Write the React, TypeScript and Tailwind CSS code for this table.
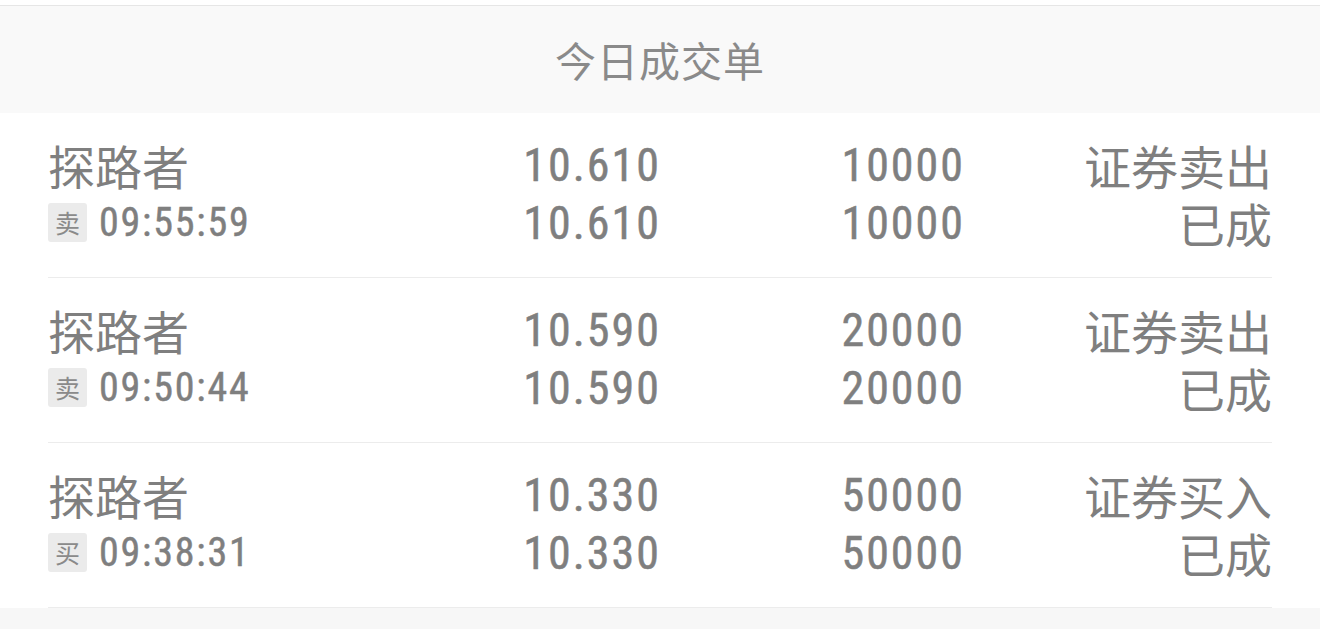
import React from "react";

const rows = [
  { name: "探路者", side: "卖", time: "09:55:59", price: "10.610", qty: "10000", type: "证券卖出", status: "已成" },
  { name: "探路者", side: "卖", time: "09:50:44", price: "10.590", qty: "20000", type: "证券卖出", status: "已成" },
  { name: "探路者", side: "买", time: "09:38:31", price: "10.330", qty: "50000", type: "证券买入", status: "已成" },
];

function Num({ children }: { children: React.ReactNode }) {
  return (
    <div className="h-[58px] text-[46px] leading-[58px] tracking-[2px] mr-[-2px] [-webkit-text-stroke:0.5px_#7f7f7f] font-['Roboto_Condensed','Roboto',sans-serif]">
      {children}
    </div>
  );
}

function Cjk({ children }: { children: React.ReactNode }) {
  return <div className="h-[58px] text-[47px] leading-[58px]">{children}</div>;
}

export default function App() {
  return (
    <div className="w-[1320px] h-[629px] bg-[#f7f7f7] overflow-hidden font-['Noto_Sans_CJK_SC','Noto_Sans',sans-serif]">
      <div className="h-[5px] bg-white" />
      <div className="h-[108px] bg-[#f9f9f9] border-t border-[#e6e6e6] flex items-center justify-center">
        <span className="text-[41px] leading-none text-[#8a8a8a] tracking-[1px]">今日成交单</span>
      </div>
      <div className="bg-white px-[48px]">
        {rows.map((r, i) => (
          <div
            key={i}
            className="h-[165px] pb-[3px] border-b border-[#ececec] grid grid-cols-[400px_211px_304px_1fr] content-center text-[#7f7f7f]"
          >
            <div className="flex flex-col">
              <Cjk>{r.name}</Cjk>
              <div className="h-[58px] flex items-center gap-[12px]">
                <span className="w-[39px] h-[39px] bg-[#ebebeb] rounded-[3px] flex items-center justify-center text-[25px] leading-none text-[#8a8a8a]">
                  {r.side}
                </span>
                <span className="text-[40px] leading-[58px] tracking-[1.8px] [-webkit-text-stroke:0.45px_#7f7f7f] font-['Roboto_Condensed','Roboto',sans-serif]">
                  {r.time}
                </span>
              </div>
            </div>
            <div className="flex flex-col items-end">
              <Num>{r.price}</Num>
              <Num>{r.price}</Num>
            </div>
            <div className="flex flex-col items-end">
              <Num>{r.qty}</Num>
              <Num>{r.qty}</Num>
            </div>
            <div className="flex flex-col items-end">
              <Cjk>{r.type}</Cjk>
              <Cjk>{r.status}</Cjk>
            </div>
          </div>
        ))}
      </div>
    </div>
  );
}
